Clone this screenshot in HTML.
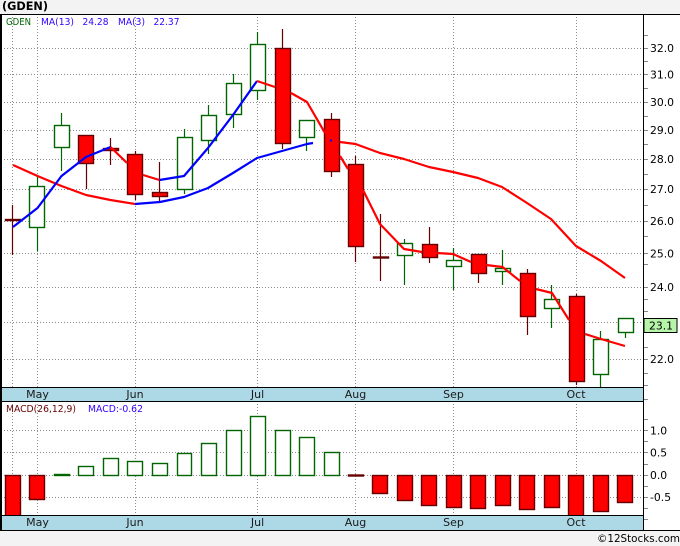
<!DOCTYPE html>
<html><head><meta charset="utf-8"><title>GDEN</title>
<style>
html,body{margin:0;padding:0;background:#f3f3f3;width:680px;height:546px;overflow:hidden}
svg{display:block}
text{font-family:"DejaVu Sans","Liberation Sans",sans-serif}
</style></head><body>
<svg width="680" height="546" viewBox="0 0 680 546" xmlns="http://www.w3.org/2000/svg">
<rect width="680" height="546" fill="#f3f3f3"/>
<rect x="0" y="14" width="680" height="516" fill="#fff"/>
<text x="2" y="10" font-size="11.5" font-weight="bold" textLength="46" lengthAdjust="spacingAndGlyphs">(GDEN)</text>

<!-- grid -->
<g stroke="#8c8c8c" stroke-width="1" stroke-dasharray="1 2" fill="none" shape-rendering="crispEdges">
<path d="M1 48.5H643M1 74.5H643M1 102.5H643M1 130.5H643M1 159.5H643M1 189.5H643M1 221.5H643M1 253.5H643M1 287.5H643M1 322.5H643M1 359.5H643"/>
<path d="M1 430.5H643M1 452.5H643M1 475.5H643M1 497.5H643"/>
<path d="M12.5 14V387M37.5 14V387M135.5 14V387M257.5 14V387M355.5 14V387M453.5 14V387M576.5 14V387"/>
<path d="M12.5 401V515M37.5 401V515M135.5 401V515M257.5 401V515M355.5 401V515M453.5 401V515M576.5 401V515"/>
</g>

<!-- wicks -->
<g stroke="#006400" stroke-width="1.2" fill="none">
<path d="M37.5 176V251M61.5 113V171M184.5 129V194M208.5 105V154M233.5 74V128M257.5 32V100M306.5 120V151M404.5 239V285M453.5 248V290M502.5 250V285M551.5 285V328M600.5 331V387M625.5 332V338"/>
</g>
<g stroke="#660000" stroke-width="1.2" fill="none">
<path d="M12.5 205V255M86.5 135V189M110.5 138V165M135.5 151V200M159.5 162V201M282.5 29V149M331.5 113V177M355.5 156V262M380.5 214V281M429.5 227V263M478.5 254V283M527.5 269V335M576.5 294V385"/>
</g>

<!-- candle bodies -->
<g fill="#fff" stroke="#006400" stroke-width="1.4">
<rect x="29.5" y="186.5" width="15" height="41"/>
<rect x="54.5" y="125.5" width="15" height="22"/>
<rect x="177.5" y="137.5" width="15" height="52"/>
<rect x="201.5" y="115.5" width="15" height="25"/>
<rect x="226.5" y="83.5" width="15" height="31"/>
<rect x="250.5" y="44.5" width="15" height="46"/>
<rect x="299.5" y="120.5" width="15" height="17"/>
<rect x="397.5" y="243.5" width="15" height="12"/>
<rect x="446.5" y="260.5" width="15" height="6"/>
<rect x="495.5" y="268.5" width="15" height="3"/>
<rect x="544.5" y="299.5" width="15" height="9"/>
<rect x="593.5" y="339.5" width="15" height="35"/>
<rect x="618.5" y="318.5" width="15" height="14"/>
</g>
<g fill="#f00" stroke="#660000" stroke-width="1.4">
<rect x="5.5" y="219.5" width="15" height="1"/>
<rect x="78.5" y="135.5" width="15" height="28"/>
<rect x="103.5" y="148.5" width="15" height="2"/>
<rect x="127.5" y="154.5" width="15" height="40"/>
<rect x="152.5" y="192.5" width="15" height="4"/>
<rect x="275.5" y="48.5" width="15" height="95"/>
<rect x="324.5" y="119.5" width="15" height="52"/>
<rect x="348.5" y="164.5" width="15" height="82"/>
<rect x="373.5" y="257" width="15" height="1"/>
<rect x="422.5" y="244.5" width="15" height="13"/>
<rect x="471.5" y="254.5" width="15" height="19"/>
<rect x="520.5" y="273.5" width="15" height="43"/>
<rect x="569.5" y="296.5" width="15" height="85"/>
</g>

<!-- moving averages -->
<g fill="none" stroke-width="2.2" stroke-linejoin="round">
<polyline stroke="#f00" points="13,165 37.5,176 61.5,186 86,195 110.5,200 135,204"/>
<polyline stroke="#00f" points="135,204 160,202 184,197 208,188 233,173 257,158 282,151 307,144 313,143"/>
<polyline stroke="#f00" points="340,142 355.5,144 380,153 404,159 429,167 453,172 478,178 502,187 527,203 551,219 576,246 601,261 625,278"/>
<polyline stroke="#00f" points="13,227 37.5,208 61.5,176 86,157 110.5,147"/>
<polyline stroke="#f00" points="110.5,147 127,163"/>
<polyline stroke="#f00" points="143,175 159.5,180"/>
<polyline stroke="#00f" points="159.5,180 184,176 208,148 233,115 257,81"/>
<polyline stroke="#f00" points="257,81 275,87"/>
<polyline stroke="#f00" points="291,93 307,102 325,133"/>
<polyline stroke="#f00" points="340,156 348,169"/>
<polyline stroke="#f00" points="363,190 380,224 404,249 422,252"/>
<polyline stroke="#f00" points="437,253 453,254 471,262"/>
<polyline stroke="#f00" points="486,265 502.5,267 520,281"/>
<polyline stroke="#f00" points="536,289 552,293 569,320"/>
<polyline stroke="#f00" points="585,334 601,339 625,346"/>
<rect x="330" y="139.5" width="2" height="2" fill="#00f" stroke="none"/>
</g>

<!-- legends -->
<g font-size="10">
<text x="6" y="25" fill="#006400" textLength="25" lengthAdjust="spacingAndGlyphs">GDEN</text>
<text x="41" y="25" fill="#3300ff" textLength="33" lengthAdjust="spacingAndGlyphs">MA(13)</text>
<text x="82.5" y="25" fill="#3300ff" textLength="26" lengthAdjust="spacingAndGlyphs">24.28</text>
<text x="118" y="25" fill="#3300ff" textLength="27" lengthAdjust="spacingAndGlyphs">MA(3)</text>
<text x="153.5" y="25" fill="#3300ff" textLength="26" lengthAdjust="spacingAndGlyphs">22.37</text>
<text x="6" y="412" fill="#660000" textLength="70" lengthAdjust="spacingAndGlyphs">MACD(26,12,9)</text>
<text x="88" y="412" fill="#3300ff" textLength="55" lengthAdjust="spacingAndGlyphs">MACD:-0.62</text>
</g>

<!-- MACD bars -->
<g fill="#fff" stroke="#006400" stroke-width="1.4">
<rect x="54.5" y="474.5" width="15" height="1" fill="#006400"/>
<rect x="78.5" y="466.5" width="15" height="9"/>
<rect x="103.5" y="458.5" width="15" height="17"/>
<rect x="127.5" y="461.5" width="15" height="14"/>
<rect x="152.5" y="463.5" width="15" height="12"/>
<rect x="177.5" y="453.5" width="14" height="22"/>
<rect x="201.5" y="443.5" width="15" height="32"/>
<rect x="226.5" y="430.5" width="15" height="45"/>
<rect x="250.5" y="416.5" width="15" height="59"/>
<rect x="275.5" y="430.5" width="15" height="45"/>
<rect x="299.5" y="437.5" width="15" height="38"/>
<rect x="324.5" y="452.5" width="15" height="23"/>
</g>
<g fill="#f00" stroke="#660000" stroke-width="1.4">
<rect x="5.5" y="475.5" width="15" height="41"/>
<rect x="29.5" y="475.5" width="15" height="24"/>
<rect x="348.5" y="475" width="15" height="1"/>
<rect x="372.5" y="475.5" width="15" height="18"/>
<rect x="397.5" y="475.5" width="15" height="25"/>
<rect x="421.5" y="475.5" width="15" height="30"/>
<rect x="446.5" y="475.5" width="15" height="32"/>
<rect x="470.5" y="475.5" width="15" height="33"/>
<rect x="495.5" y="475.5" width="15" height="30"/>
<rect x="519.5" y="475.5" width="15" height="34"/>
<rect x="544.5" y="475.5" width="15" height="32"/>
<rect x="568.5" y="475.5" width="15" height="41"/>
<rect x="593.5" y="475.5" width="15" height="36"/>
<rect x="617.5" y="475.5" width="15" height="27"/>
</g>

<!-- date bands -->
<rect x="0" y="387" width="643" height="14" fill="#add8e6"/>
<rect x="0" y="515" width="643" height="15" fill="#add8e6"/>
<g fill="#000" shape-rendering="crispEdges">
<rect x="0" y="387" width="644" height="1"/>
<rect x="0" y="401" width="644" height="1"/>
<rect x="0" y="515" width="644" height="1"/>
<rect x="0" y="530" width="680" height="1"/>
<rect x="0" y="14" width="680" height="1"/>
<rect x="0" y="14" width="2" height="516"/>
<rect x="643" y="14" width="1" height="516"/>
</g>
<g font-size="11" fill="#1a1a1a" text-anchor="middle">
<text x="37.5" y="398">May</text><text x="135" y="398">Jun</text><text x="257.5" y="398">Jul</text><text x="355.5" y="398">Aug</text><text x="453.5" y="398">Sep</text><text x="576" y="398">Oct</text>
<text x="37.5" y="526">May</text><text x="135" y="526">Jun</text><text x="257.5" y="526">Jul</text><text x="355.5" y="526">Aug</text><text x="453.5" y="526">Sep</text><text x="576" y="526">Oct</text>
</g>

<!-- axis ticks -->
<g stroke="#888" stroke-width="1" shape-rendering="crispEdges">
<path d="M644 35.5H648M644 48.5H648M644 61.5H648M644 74.5H648M644 88.5H648M644 102.5H648M644 116.5H648M644 130.5H648M644 144.5H648M644 159.5H648M644 174.5H648M644 189.5H648M644 205.5H648M644 221.5H648M644 236.5H648M644 253.5H648M644 264.5H648M644 287.5H648M644 299.5H648M644 311.5H648M644 347.5H648M644 359.5H648M644 373.5H648M644 385.5H648M644 399.5H648"/>
<path d="M644 419.5H648M644 430.5H648M644 441.5H648M644 452.5H648M644 464.5H648M644 475.5H648M644 486.5H648M644 497.5H648M644 508.5H648M644 519.5H648"/>
</g>
<g font-size="10.8" fill="#000">
<text x="650" y="52">32.0</text><text x="650" y="78.5">31.0</text><text x="650" y="106">30.0</text><text x="650" y="134">29.0</text><text x="650" y="163">28.0</text><text x="650" y="193">27.0</text><text x="650" y="225">26.0</text><text x="650" y="257.5">25.0</text><text x="650" y="291">24.0</text><text x="650" y="363">22.0</text>
<text x="650" y="434.5">1.0</text><text x="650" y="456.5">0.5</text><text x="650" y="479">0.0</text><text x="650" y="501">-0.5</text>
</g>
<rect x="644" y="318.5" width="33" height="14" fill="#b6f5a9" stroke="#000" stroke-width="1.2" shape-rendering="crispEdges"/>
<text x="649" y="329.5" font-size="10.8" fill="#000">23.1</text>
<text x="597" y="542" font-size="11" fill="#000" textLength="83" lengthAdjust="spacingAndGlyphs">©12Stocks.com</text>
</svg>
</body></html>
